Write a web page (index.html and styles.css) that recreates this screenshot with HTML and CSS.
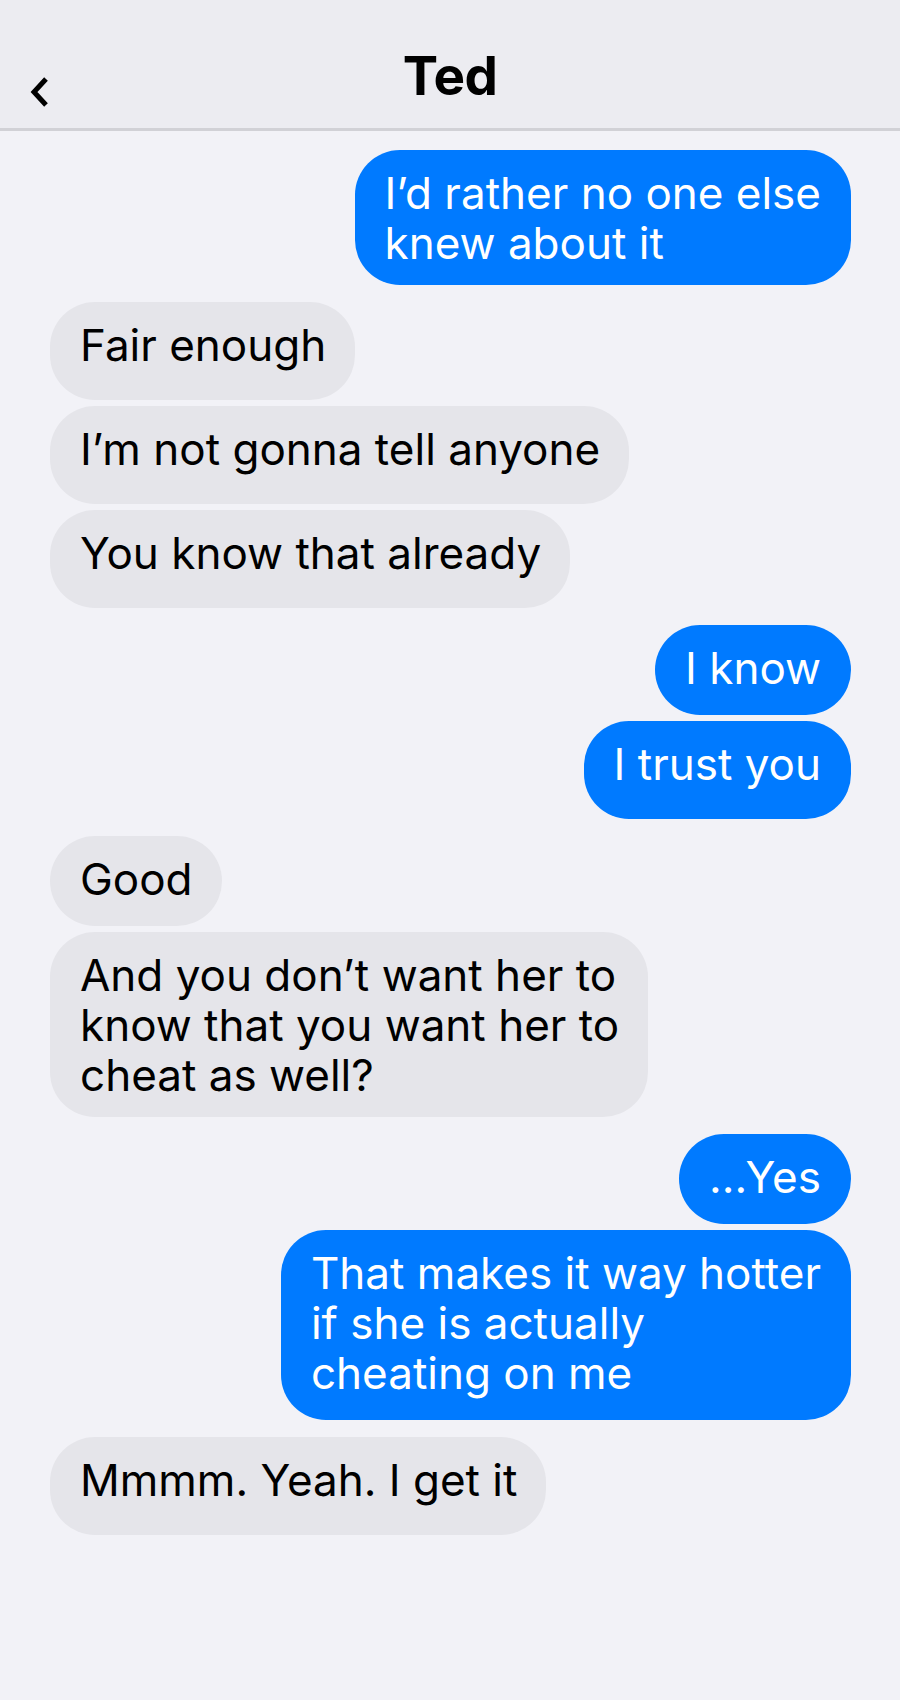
FILE: index.html
```html
<!DOCTYPE html>
<html lang="en">
<head>
<meta charset="utf-8">
<title>Ted</title>
<link rel="stylesheet" href="styles.css">
</head>
<body>
<div class="screen">
  <header class="nav">
    <span class="back" aria-label="Back">
      <svg width="22" height="32" viewBox="0 0 22 32" aria-hidden="true">
        <polyline points="18,3 6,16 18,29" fill="none" stroke="#000" stroke-width="5" stroke-linejoin="miter"/>
      </svg>
    </span>
    <h1 class="title">Ted</h1>
    <span class="nav-spacer"></span>
  </header>

  <main class="thread">
    <div class="group sent">
      <p class="bubble multi flat">I’d rather no one else<br>knew about it</p>
    </div>

    <div class="group received">
      <p class="bubble">Fair enough</p>
      <p class="bubble">I’m not gonna tell anyone</p>
      <p class="bubble">You know that already</p>
    </div>

    <div class="group sent">
      <p class="bubble flat">I know</p>
      <p class="bubble">I trust you</p>
    </div>

    <div class="group received">
      <p class="bubble flat">Good</p>
      <p class="bubble multi flat">And you don’t want her to<br>know that you want her to<br>cheat as well?</p>
    </div>

    <div class="group sent">
      <p class="bubble flat">...Yes</p>
      <p class="bubble multi">That makes it way hotter<br>if she is actually<br>cheating on me</p>
    </div>

    <div class="group received">
      <p class="bubble">Mmmm. Yeah. I get it</p>
    </div>
  </main>
</div>
</body>
</html>
```

FILE: styles.css
```css
html, body {
  margin: 0;
  padding: 0;
  background: #f2f2f7;
}

.screen {
  min-height: 1700px;
  font-family: Inter, "Noto Sans", "DejaVu Sans", sans-serif;
  color: #000;
}

/* Navigation bar */
.nav {
  display: grid;
  grid-template-columns: 1fr auto 1fr;
  align-items: start;
  height: 128px;
  background: #ececf1;
  border-bottom: 3px solid #d1d1d6;
  box-sizing: content-box;
}

.back {
  display: block;
  margin: 76px 0 0 28px;
  line-height: 0;
}

.title {
  margin: 44px 0 0;
  font-size: 53px;
  line-height: 64px;
  font-weight: 700;
  letter-spacing: -0.5px;
}

/* Message thread */
.thread {
  display: flex;
  flex-direction: column;
  gap: 17px;
  padding: 19px 49px 0 50px;
}

.group {
  display: flex;
  flex-direction: column;
  gap: 6px;
}

.group.sent {
  align-items: flex-end;
}

.group.received {
  align-items: flex-start;
}

.bubble {
  margin: 0;
  white-space: nowrap;
  box-sizing: border-box;
  padding: 18px 29px 30px 30px;
  border-radius: 45px;
  font-size: 44px;
  line-height: 50px;
  font-weight: 400;
}

.bubble.flat {
  padding-bottom: 22px;
}

.bubble.multi {
  padding-bottom: 22px;
}

.bubble.multi.flat {
  padding-bottom: 17px;
}

.sent .bubble {
  background: #007aff;
  color: #fff;
  padding-left: 30px;
  padding-right: 30px;
}

.received .bubble {
  background: #e5e5ea;
  color: #000;
}
```
